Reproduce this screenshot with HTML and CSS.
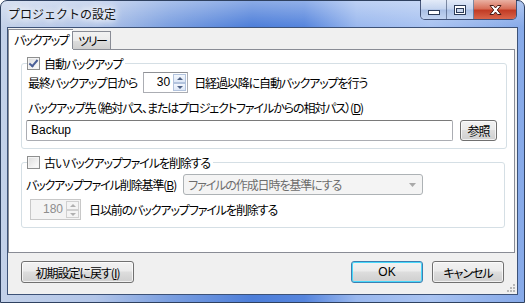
FILE: index.html
```html
<!DOCTYPE html>
<html lang="ja">
<head>
    <meta charset="UTF-8">
    <title>プロジェクトの設定</title>
    <link rel="stylesheet" href="styles.css">
</head>
<body>
    <div class="window">
        <div class="titlebar">
            <span class="title">プロジェクトの設定</span>
            <div class="controls">
                <div class="ctl ctl-min">
                    <svg width="12" height="5" viewBox="0 0 12 5"><rect x="0.5" y="0.5" width="11" height="4" fill="#fff" stroke="#2c3b57"/></svg>
                </div>
                <div class="ctl ctl-max">
                    <svg width="12" height="10" viewBox="0 0 12 10"><rect x="0.5" y="0.5" width="11" height="9" fill="#fff" stroke="#2c3b57"/><rect x="2.5" y="3.5" width="7" height="4" fill="#c9d7ee" stroke="#2c3b57"/></svg>
                </div>
                <div class="ctl ctl-close">
                    <svg width="13" height="10" viewBox="0 0 13 10"><path d="M1 0.5h3.5l2 2.5 2-2.5h3.5l-3.7 4.5 3.7 4.5h-3.5l-2-2.5-2 2.5h-3.5l3.7-4.5z" fill="#fff" stroke="#4a1b14" stroke-linejoin="round"/></svg>
                </div>
            </div>
        </div>
        <div class="client">
            <div class="tabs">
                <div class="tab active">バックアップ</div>
                <div class="tab">ツリー</div>
            </div>
            <div class="panel">
                <fieldset class="group">
                    <legend><span class="check checked"></span>自動バックアップ</legend>
                    <div class="row row-spin">
                        <span class="label">最終バックアップ日から</span>
                        <div class="spin">
                            <span class="spin-value">30</span>
                            <span class="spin-arrows"><i class="up"></i><i class="down"></i></span>
                        </div>
                        <span class="label after">日経過以降に自動バックアップを行う</span>
                    </div>
                    <div class="row row-text">
                        <span class="label">バックアップ先（絶対パス、またはプロジェクトファイルからの相対パス）(<u>D</u>)</span>
                    </div>
                    <div class="row row-input">
                        <div class="textbox">Backup</div>
                        <div class="btn btn-small">参照</div>
                    </div>
                </fieldset>

                <fieldset class="group group-old">
                    <legend><span class="check"></span>古いバックアップファイルを削除する</legend>
                    <div class="row row-combo">
                        <span class="label">バックアップファイル削除基準(<u>B</u>)</span>
                        <div class="combo">
                            <span>ファイルの作成日時を基準にする</span>
                            <svg width="7" height="4" viewBox="0 0 7 4"><path d="M0 0h7l-3.5 4z" fill="#a9a9a9"/></svg>
                        </div>
                    </div>
                    <div class="row row-days">
                        <div class="spin disabled">
                            <span class="spin-value">180</span>
                            <span class="spin-arrows"><i class="up"></i><i class="down"></i></span>
                        </div>
                        <span class="label after">日以前のバックアップファイルを削除する</span>
                    </div>
                </fieldset>
            </div>
            <div class="footer">
                <div class="btn btn-reset">初期設定に戻す(<u>I</u>)</div>
                <div class="spacer"></div>
                <div class="btn btn-default">OK</div>
                <div class="btn">キャンセル</div>
                <svg class="grip" width="9" height="9" viewBox="0 0 9 9">
                    <g fill="#b8b8b8"><rect x="6" y="0" width="2" height="2"/><rect x="3" y="3" width="2" height="2"/><rect x="6" y="3" width="2" height="2"/><rect x="0" y="6" width="2" height="2"/><rect x="3" y="6" width="2" height="2"/><rect x="6" y="6" width="2" height="2"/></g>
                </svg>
            </div>
        </div>
    </div>
</body>
</html>
```

FILE: styles.css
```css
* {
    box-sizing: border-box;
}
body {
    margin: 0;
    width: 525px;
    height: 303px;
    overflow: hidden;
    background: #fff;
    font-family: "Noto Sans CJK JP", sans-serif;
    font-size: 12px;
    color: #000;
}
.window {
    width: 525px;
    height: 303px;
    display: flex;
    flex-direction: column;
    padding: 0 6px 7px 6px;
    border: 1px solid #2f4160;
    border-radius: 7px 7px 0 0;
    background:
        linear-gradient(180deg, rgba(255, 255, 255, 0.35) 0, rgba(255, 255, 255, 0) 26px),
        linear-gradient(90deg, #c3d1e9 0%, #b2c5e8 18%, #7b9fe0 32%, #4d7ed9 48%, #5685dd 58%, #9ab8ee 68%, #a9c3f1 82%, #86a9e8 100%);
}

/* Title bar */
.titlebar {
    height: 26px;
    display: flex;
    justify-content: space-between;
    align-items: flex-start;
    padding: 0 1px 0 1px;
}
.title {
    margin-top: 5px;
    line-height: 16px;
    color: #111;
    text-shadow: 0 0 6px #fff, 0 0 8px #fff, 0 0 10px #fff;
}
.controls {
    display: flex;
    height: 20px;
    margin-top: -1px;
    border: 1px solid rgba(30, 45, 80, 0.75);
    border-top: none;
    border-radius: 0 0 5px 5px;
    overflow: hidden;
}
.ctl {
    display: flex;
    align-items: center;
    justify-content: center;
    height: 19px;
    background: linear-gradient(180deg, #e3ebf8 0%, #c4d4ef 48%, #a9bfe5 52%, #c3d5f2 100%);
    border-right: 1px solid rgba(30, 45, 80, 0.5);
}
.ctl-min {
    width: 26px;
    padding-top: 6px;
}
.ctl-max {
    width: 27px;
}
.ctl-close {
    width: 42px;
    border-right: none;
    background: linear-gradient(180deg, #eab1a3 0%, #d8705a 45%, #c23c25 55%, #d9654b 100%);
}

/* Client area */
.client {
    flex: 1;
    display: flex;
    flex-direction: column;
    background: #f0f0f0;
    border: 1px solid #3d5277;
    padding: 0 2px 0 0;
    position: relative;
}
.tabs {
    display: flex;
    align-items: flex-end;
    height: 21px;
    position: relative;
    z-index: 1;
}
.tab {
    height: 18px;
    padding: 0 4px 0 5px;
    line-height: 17px;
    font-feature-settings: "palt";
    letter-spacing: -1.5px;
    border: 1px solid #898c95;
    border-bottom: none;
    background: linear-gradient(180deg, #f2f2f2 0%, #ebebeb 50%, #dddddd 51%, #cfcfcf 100%);
    margin-left: -1px;
}
.tab.active {
    height: 21px;
    margin-bottom: -1px;
    margin-left: 0;
    padding: 0 5px 0 5px;
    line-height: 19px;
    background: #fff;
    border-right: none;
}
.panel {
    height: 204px;
    background: #fff;
    border: 1px solid #898c95;
    padding: 6px 9px 0 12px;
}

/* Group boxes */
.group {
    margin: 0;
    padding: 0 9px 7px 4px;
    border: 1px solid #d5dfe5;
    border-radius: 3px;
}
.group-old {
    margin-top: 6px;
}
legend {
    display: flex;
    align-items: center;
    height: 14px;
    margin-left: 1px;
    padding: 0 3px 0 0;
    font-feature-settings: "palt";
    letter-spacing: -1.1px;
}
.check {
    width: 13px;
    height: 13px;
    margin-right: 4px;
    border: 1px solid #8e8f8f;
    background: linear-gradient(135deg, #dcdcdc 0%, #f4f4f4 70%, #fdfdfd 100%);
    box-shadow: inset 0 0 0 1px #f4f4f4;
    position: relative;
}
.check.checked::after {
    content: "";
    position: absolute;
    left: 3px;
    top: 0px;
    width: 3px;
    height: 7px;
    border: solid #4a5f97;
    border-width: 0 2px 2px 0;
    transform: rotate(40deg);
}
.row {
    display: flex;
    align-items: center;
}
.label {
    font-feature-settings: "palt";
    white-space: nowrap;
    letter-spacing: -1.1px;
}
.row-spin {
    height: 21px;
    margin-top: 2px;
    padding-left: 2px;
}
.row-spin .spin {
    margin-left: 6px;
    width: 45px;
    flex: none;
}
.label.after {
    margin-left: 6px;
}
.row-text {
    height: 16px;
    margin-top: 6px;
    padding-left: 2px;
}
.row-input {
    height: 21px;
    margin-top: 5px;
    gap: 7px;
}
.textbox {
    width: 427px;
    height: 21px;
    padding: 0 4px;
    line-height: 19px;
    font-family: "Liberation Sans", sans-serif;
    border: 1px solid #abadb3;
    border-top-color: #7a7a7a;
    border-radius: 2px;
    background: #fff;
}

/* Spin box */
.spin {
    display: flex;
    height: 21px;
    border: 1px solid #abadb3;
    border-top-color: #8f9196;
    background: #fff;
}
.spin-value {
    flex: 1;
    text-align: right;
    padding-right: 2px;
    line-height: 19px;
    font-family: "Liberation Sans", sans-serif;
}
.spin-arrows {
    display: flex;
    flex-direction: column;
    width: 15px;
    padding: 1px;
}
.spin-arrows i {
    flex: 1;
    position: relative;
    border: 1px solid #b2c3dd;
    background: linear-gradient(180deg, #f3f7fd 0%, #dde7f6 100%);
}
.spin-arrows i::after {
    content: "";
    position: absolute;
    left: 3px;
    border-left: 3px solid transparent;
    border-right: 3px solid transparent;
}
.spin-arrows .up::after {
    top: 2px;
    border-bottom: 3px solid #4d6185;
}
.spin-arrows .down::after {
    top: 2px;
    border-top: 3px solid #4d6185;
}
.spin.disabled {
    width: 51px;
    flex: none;
    margin-left: 4px;
    background: #f4f4f4;
    border-color: #c8c8c8;
    color: #8d8d8d;
}
.spin.disabled .spin-arrows i {
    border-color: #d0d0d0;
    background: #f4f4f4;
}
.spin.disabled .spin-arrows .up::after {
    border-bottom-color: #b0b0b0;
}
.spin.disabled .spin-arrows .down::after {
    border-top-color: #b0b0b0;
}

/* Combo */
.row-combo {
    height: 21px;
    margin-top: 5px;
}
.combo {
    display: flex;
    align-items: center;
    justify-content: space-between;
    width: 240px;
    height: 21px;
    margin-left: 7px;
    padding: 0 6px 0 4px;
    border: 1px solid #adb2b5;
    border-radius: 3px;
    background: #f4f4f4;
    color: #6d6d6d;
    font-feature-settings: "palt";
    letter-spacing: -1.1px;
    white-space: nowrap;
}
.row-days {
    height: 21px;
    margin-top: 4px;
}
.row-days .label.after {
    margin-left: 8px;
}

/* Buttons */
.btn {
    display: flex;
    align-items: center;
    justify-content: center;
    height: 22px;
    width: 72px;
    border: 1px solid #707070;
    border-radius: 3px;
    background: linear-gradient(180deg, #f2f2f2 0%, #ebebeb 45%, #dddddd 50%, #cfcfcf 100%);
    box-shadow: inset 0 0 0 1px rgba(255, 255, 255, 0.7);
    font-feature-settings: "palt";
    letter-spacing: -1px;
    white-space: nowrap;
}
.btn-small {
    width: 37px;
    height: 21px;
}
.footer {
    flex: 1;
    display: flex;
    align-items: flex-start;
    gap: 9px;
    padding: 8px 11px 0 13px;
}
.btn-reset {
    width: 113px;
}
.spacer {
    flex: 1;
}
.btn-default {
    border-color: #3c7fb1;
    box-shadow: inset 0 0 0 1px #48d8fb;
    font-family: "Liberation Sans", sans-serif;
    letter-spacing: 0;
}
.grip {
    position: absolute;
    right: 1px;
    bottom: 1px;
}
```
